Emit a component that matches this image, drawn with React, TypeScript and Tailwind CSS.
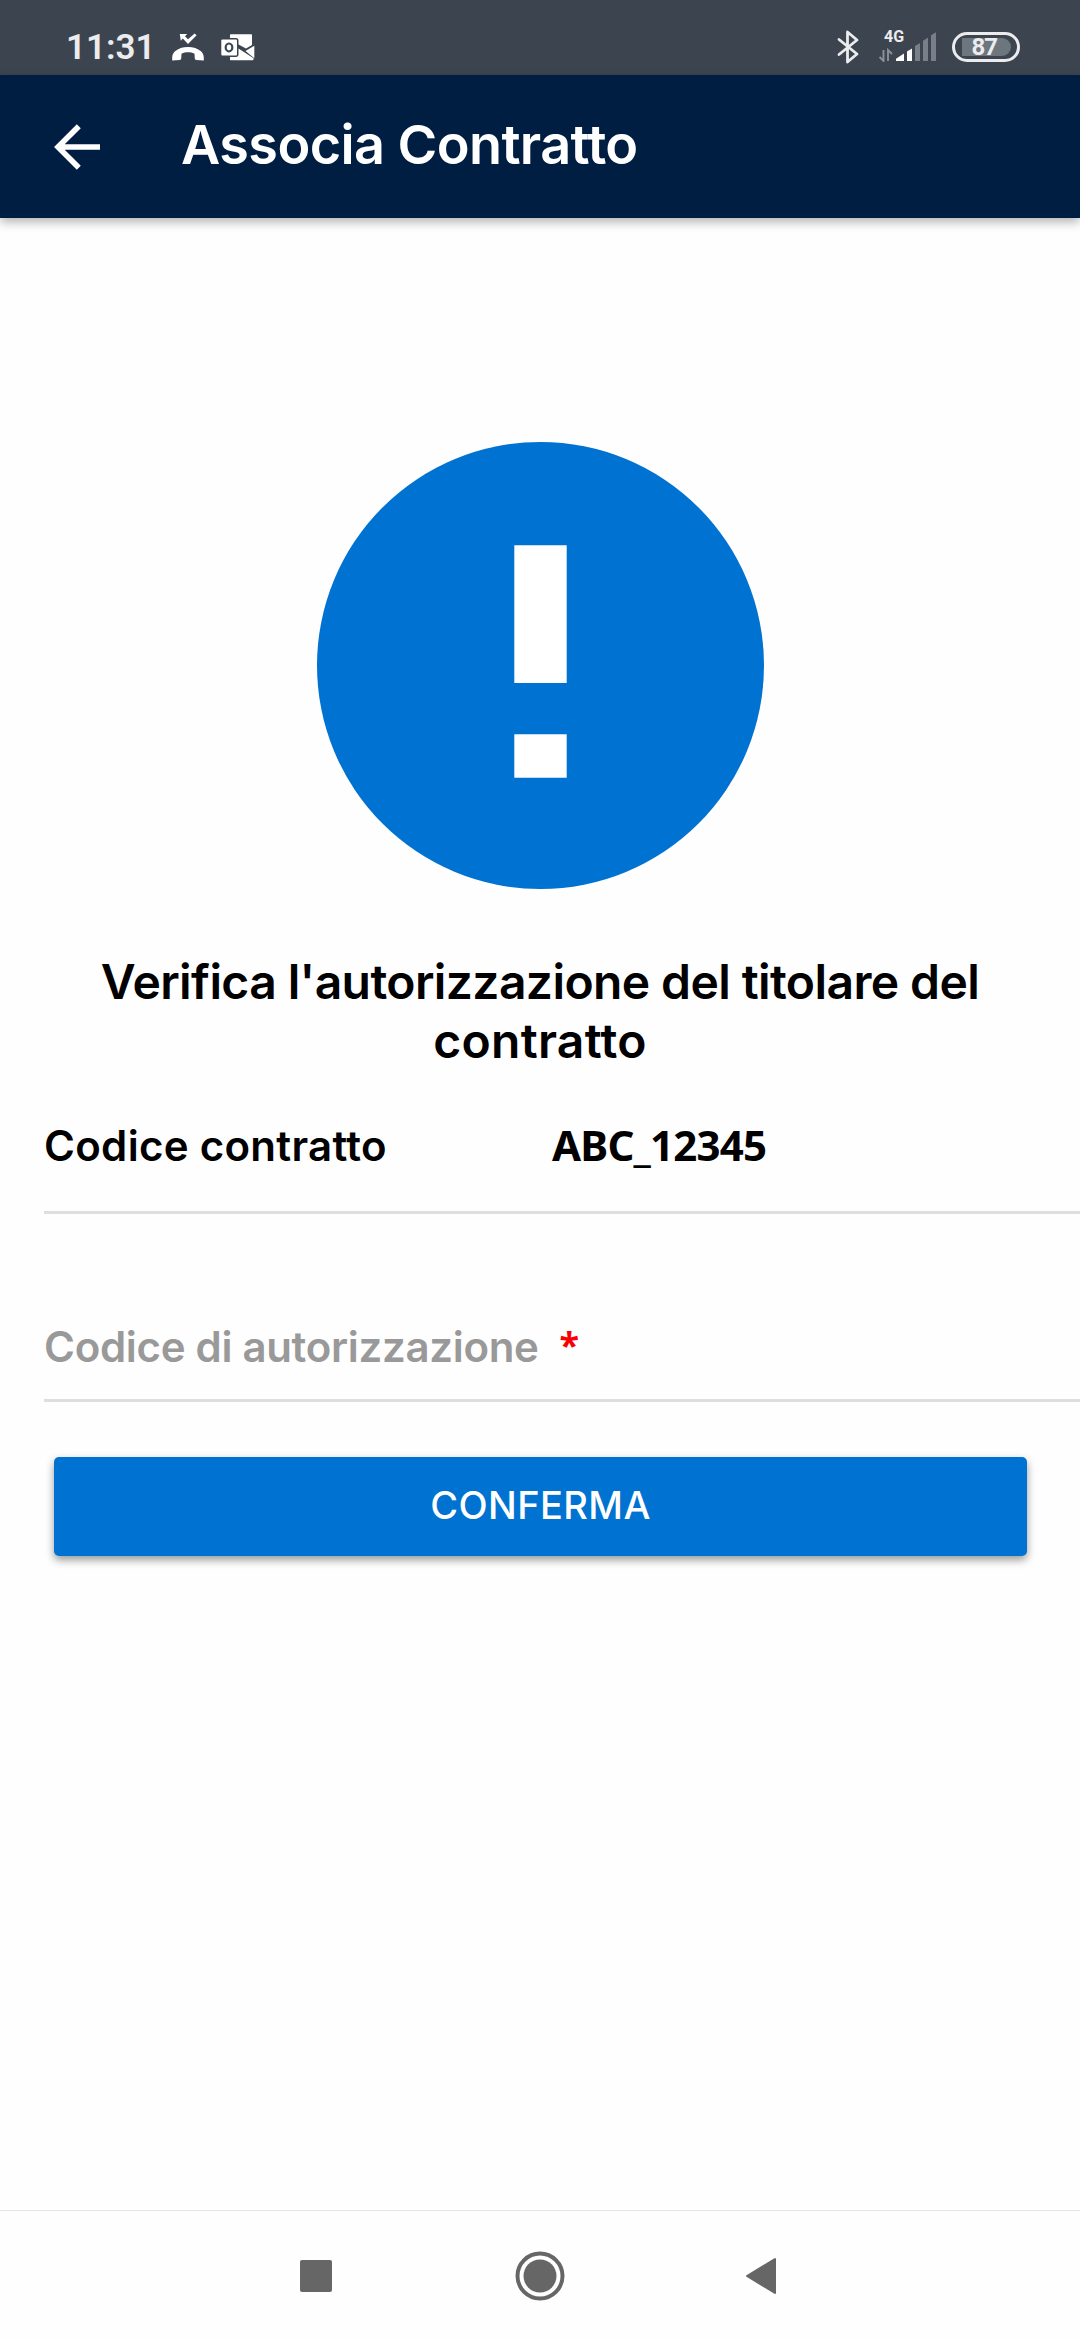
import React, { useState } from 'react';

const MissedCallIcon: React.FC = () => (
  <svg className="w-8 h-7" viewBox="0 0 32 28" fill="#fff">
    <path d="M7.8 1h7.4L13 3.2l3 3.1L22.600.4l2 1.8L16 11l-5.200-5.600-2 2.300z" />
    <path d="M16 14c5.400 0 9.500 1.500 13 4.300 2 1.800 2.800 4 2.800 6.700v2.500l-7.600-.6c-.8-.1-1.300-.6-1.400-1.500l-.3-4.600C20.500 19.500 18 19.200 16 19.200s-4.500.3-6.500 1.600l-.3 4.600c-.1.900-.6 1.400-1.400 1.500L.2 27.500V25c0-2.700.8-4.900 2.800-6.700C6.500 15.500 10.600 14 16 14z" />
  </svg>
);

const OutlookIcon: React.FC = () => (
  <svg className="w-[34px] h-[27px]" viewBox="0 0 34 27">
    <path d="M10 .3h20.300c.4 0 .7.300.7.700v10L25 14.500l-7.500-4V6.500c0-1.500-.8-2.500-2.500-2.500H9V1.300c0-.6.400-1 1-1z" fill="#fff" />
    <path d="M33.300 11.800v12.400L24.500 17z" fill="#fff" />
    <path d="M17.500 14.500l15 9.700v1.300c0 .5-.3.800-.8.800H10c-.6 0-1-.4-1-1V23h6c1.700 0 2.500-1 2.500-2.500z" fill="#fff" />
    <rect x=".3" y="5.500" width="15.700" height="16" rx="1" fill="#fff" />
    <ellipse cx="8" cy="13.400" rx="3.300" ry="3.900" fill="none" stroke="#3c454f" strokeWidth="2.200" />
  </svg>
);

const BluetoothIcon: React.FC = () => (
  <svg className="w-[22px] h-[34px]" viewBox="0 0 22 34" fill="none" stroke="#ececee" strokeWidth="2.800" strokeLinecap="round" strokeLinejoin="round">
    <path d="M2 9.500 20 24 10.500 32V2L20 10 2 24.500" />
  </svg>
);

const SignalIcon: React.FC = () => (
  <svg className="w-[58px] h-[30px]" viewBox="0 0 58 30">
    <path d="M4.500 18v11l-4-4M9 29V18l4 4" fill="none" stroke="#8b9197" strokeWidth="1.900" />
    <path d="M17 29v-2.200l8-5.400V29z" fill="#fff" />
    <path d="M28 29V19.500l5-3V29z" fill="#fff" />
    <path d="M36 29V14l5-3v18zM44 29V8.700l5-3.200V29zM52 29V3.200L57 .2V29z" fill="#787f86" />
  </svg>
);

const StatusBar: React.FC = () => (
  <div className="h-[75px] pt-[19px] pl-[66px] pr-[60px] flex items-center justify-between bg-[#3c454f] text-[#ececee] font-[Roboto,sans-serif]">
    <div className="flex items-center">
      <span className="w-[106px] text-[35px] leading-none font-semibold">11:31</span>
      <MissedCallIcon />
      <div className="ml-[17px]">
        <OutlookIcon />
      </div>
    </div>
    <div className="flex items-center">
      <BluetoothIcon />
      <div className="relative ml-5 mr-[15px]">
        <SignalIcon />
        <span className="absolute left-[5px] -top-[3px] text-[16px] leading-none font-bold">4G</span>
      </div>
      <div className="w-[68px] h-[30px] rounded-full border-3 border-[#ececee] flex items-center justify-center">
        <div className="w-[49px] h-[18px] rounded-l-[3px] rounded-r-full bg-[#6d757d] flex items-center pl-[10px] text-[24px] leading-none font-bold tracking-[-1px]">
          87
        </div>
      </div>
    </div>
  </div>
);

const AppHeader: React.FC = () => (
  <header className="relative h-[143px] pl-[54px] flex items-center bg-[#001e41] text-white shadow-[0_4px_10px_rgba(0,0,0,0.3)]">
    <button className="w-[46px] h-[46px] mt-px">
      <svg viewBox="0 0 46 46" fill="none" stroke="#fff" strokeWidth="5.600">
        <path d="M24.800 2.200 4 23l20.800 20.800M3 23h43" />
      </svg>
    </button>
    <h1 className="ml-[81px] pb-1 text-[54px] leading-[64px] font-[570] tracking-[-0.6px]">Associa Contratto</h1>
  </header>
);

const AlertIcon: React.FC = () => (
  <svg className="w-[447px] h-[447px]" viewBox="0 0 447 447">
    <circle cx="223.500" cy="223.500" r="223.500" fill="#0072d1" />
    <path d="M197.300 103.300h52.400V241h-52.400zM197.300 292.300h52.400v43.400h-52.400z" fill="#fff" />
  </svg>
);

const NavigationBar: React.FC = () => (
  <nav className="h-[130px] pl-[300px] pr-[303px] flex items-center justify-between border-t border-[#e4e4e4]">
    <div className="w-8 h-8 rounded-[2px] bg-[#666]" />
    <svg className="w-[50px] h-[50px] ml-[2px]" viewBox="0 0 50 50">
      <circle cx="25" cy="25" r="22.500" fill="none" stroke="#666" strokeWidth="4" />
      <circle cx="25" cy="25" r="16.500" fill="#666" />
    </svg>
    <svg className="w-8 h-[38px]" viewBox="0 0 32 38" fill="#666" stroke="#666" strokeWidth="2" strokeLinejoin="round">
      <path d="M2 19 30 2v34z" />
    </svg>
  </nav>
);

export default function App() {
  const [code, setCode] = useState('');

  return (
    <div className="w-[1080px] h-[2340px] flex flex-col overflow-hidden bg-[#fefefe] text-black font-[Inter,sans-serif]">
      <StatusBar />
      <AppHeader />

      <main className="flex-1 pt-56">
        <div className="flex justify-center">
          <AlertIcon />
        </div>

        <h2 className="mt-[63px] flex flex-col items-center text-[48px] leading-[59px] font-[570]">
          <span className="tracking-[-0.6px]">Verifica l'autorizzazione del titolare del</span>
          <span className="tracking-[0.3px]">contratto</span>
        </h2>

        {/* Contract fields */}
        <div className="ml-11 h-36 pt-[50px] flex items-baseline border-b-3 border-[#dedede] text-[42px] leading-[50px]">
          <span className="w-[508px] font-[570] tracking-[0.3px]">Codice contratto</span>
          <span className="font-bold font-['Noto_Sans',sans-serif] tracking-[-0.8px]">ABC_12345</span>
        </div>
        <label className="ml-11 h-47 pt-[108px] flex border-b-3 border-[#dedede] text-[42px] leading-[50px]">
          <span className="font-[570] text-[#999] tracking-[-0.3px]">Codice di autorizzazione</span>
          <span className="ml-[21px] -mt-[2px] text-[36px] font-bold font-['Noto_Sans',sans-serif] text-[#fb0000]">*</span>
          <input
            value={code}
            onChange={(e) => setCode(e.target.value)}
            className="flex-1 min-w-0 ml-4 h-[50px] focus:outline-none"
          />
        </label>

        <button className="block ml-[54px] mt-[55px] w-[973px] h-[99px] pb-[3px] rounded-[5px] bg-[#0072d1] text-white text-[38px] font-[550] tracking-[0.4px] shadow-[0_4px_8px_rgba(0,0,0,0.4)]">
          CONFERMA
        </button>
      </main>

      <NavigationBar />
    </div>
  );
}
